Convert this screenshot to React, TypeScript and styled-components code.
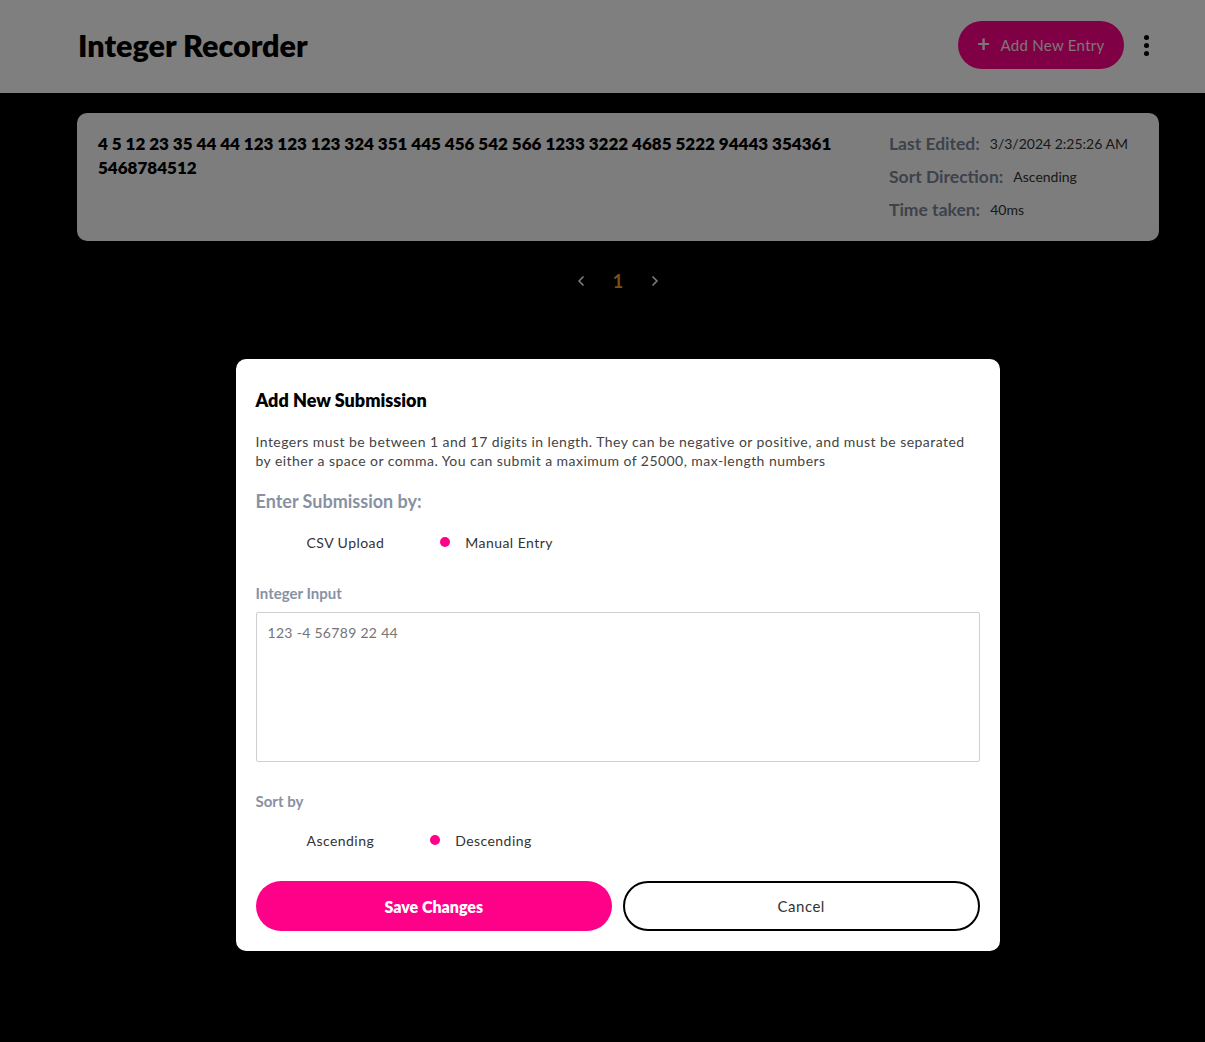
import React from 'react';
import styled, { createGlobalStyle } from 'styled-components';

const GlobalStyle = createGlobalStyle`
  html, body {
    margin: 0;
    padding: 0;
    background: #000;
    font-family: Lato, "Open Sans", sans-serif;
  }
  * { box-sizing: border-box; }
`;

const Page = styled.div`
  min-height: 1042px;
  background: #000;
`;

const Header = styled.header`
  height: 93px;
  background: #fff;
  display: flex;
  align-items: center;
  justify-content: space-between;
  padding: 0 54px 3px 78px;
`;

const Title = styled.h1`
  margin: 0;
  font-size: 30.5px;
  font-weight: 800;
  color: #000;
`;

const HeaderActions = styled.div`
  display: flex;
  align-items: center;
  gap: 18px;
`;

const AddButton = styled.button`
  height: 48px;
  width: 166px;
  border: none;
  border-radius: 24px;
  background: #ff0088;
  color: #fde8f2;
  font-family: inherit;
  font-size: 15px;
  letter-spacing: 0.3px;
  display: flex;
  align-items: center;
  justify-content: center;
  gap: 10px;
  padding: 0;
`;

const Plus = styled.span`
  font-size: 22px;
  font-weight: 700;
  line-height: 1;
  margin-top: -2px;
`;

const Kebab = styled.div`
  display: flex;
  flex-direction: column;
  gap: 3px;
  padding: 0 2px;
`;

const Dot = styled.span`
  width: 5px;
  height: 5px;
  border-radius: 50%;
  background: #000;
`;

const Content = styled.main`
  padding: 20px 46px 0 77px;
`;

const Card = styled.section`
  background: #fafafa;
  border-radius: 10px;
  height: 128px;
  padding: 19px 21px;
  display: flex;
  gap: 40px;
`;

const Numbers = styled.div`
  flex: 1;
  font-size: 17px;
  font-weight: 800;
  line-height: 24px;
  color: #000;
`;

const Meta = styled.div`
  width: 249px;
  display: flex;
  flex-direction: column;
  gap: 11px;
  padding-top: 1px;
`;

const MetaRow = styled.div`
  display: flex;
  align-items: center;
  gap: 10px;
  line-height: 22px;
`;

const MetaLabel = styled.span`
  font-size: 17.5px;
  font-weight: 700;
  color: #7a8496;
`;

const MetaValue = styled.span`
  font-size: 14px;
  color: #333;
`;

const Pagination = styled.nav`
  margin-top: 30px;
  display: flex;
  justify-content: center;
  align-items: center;
  gap: 24px;
  height: 20px;
`;

const PageArrow = styled.span`
  display: flex;
  color: #fff;
`;

const PageNumber = styled.span`
  color: #f0a22a;
  font-size: 18px;
  font-weight: 700;
`;

const Overlay = styled.div`
  position: fixed;
  inset: 0;
  background: rgba(0, 0, 0, 0.5);
  display: flex;
  justify-content: center;
  align-items: flex-start;
  padding: 359px 0 0 30px;
`;

const Modal = styled.div`
  width: 764px;
  background: #fff;
  border-radius: 10px;
  padding: 30px 20px 20px;
`;

const ModalTitle = styled.h2`
  margin: 0;
  font-size: 18px;
  line-height: 22px;
  font-weight: 800;
  color: #000;
`;

const Description = styled.p`
  margin: 21px 0 0;
  font-size: 14px;
  line-height: 19px;
  letter-spacing: 0.45px;
  color: #444;
`;

const SectionTitle = styled.h3`
  margin: 20px 0 0;
  font-size: 18px;
  line-height: 22px;
  font-weight: 700;
  color: #8891a3;
`;

const FieldLabel = styled.label<{ $top: number }>`
  display: block;
  margin-top: ${(p) => p.$top}px;
  font-size: 15px;
  line-height: 18px;
  font-weight: 700;
  color: #8891a3;
`;

const RadioRow = styled.div`
  margin-top: 20px;
  height: 20px;
  display: flex;
  align-items: center;
  gap: 56px;
  padding-left: 26px;
`;

const RadioOption = styled.div`
  display: flex;
  align-items: center;
  gap: 15px;
  font-size: 14px;
  letter-spacing: 0.45px;
  color: #333;
`;

const RadioDot = styled.span<{ $checked?: boolean }>`
  width: 10px;
  height: 10px;
  border-radius: 50%;
  background: ${(p) => (p.$checked ? '#ff0088' : 'transparent')};
`;

const TextArea = styled.textarea`
  display: block;
  margin-top: 10px;
  width: 100%;
  height: 150px;
  border: 1px solid #cfcfcf;
  border-radius: 2px;
  padding: 11px 11px;
  font-family: inherit;
  font-size: 14px;
  letter-spacing: 0.3px;
  resize: none;
  &::placeholder {
    color: #757575;
  }
`;

const ButtonRow = styled.div`
  margin-top: 31px;
  display: grid;
  grid-template-columns: 1fr 1fr;
  gap: 11px;
`;

const ModalButton = styled.button<{ $primary?: boolean }>`
  height: 50px;
  border-radius: 25px;
  font-family: inherit;
  font-size: ${(p) => (p.$primary ? 16 : 15)}px;
  letter-spacing: ${(p) => (p.$primary ? 0 : 0.5)}px;
  border: ${(p) => (p.$primary ? 'none' : '2px solid #000')};
  background: ${(p) => (p.$primary ? '#ff0088' : '#fff')};
  color: ${(p) => (p.$primary ? '#fff' : '#333')};
  font-weight: ${(p) => (p.$primary ? 800 : 400)};
`;

const Chevron = ({ dir }: { dir: 'left' | 'right' }) => (
  <svg width="16" height="16" viewBox="0 0 24 24" fill="none" stroke="currentColor" strokeWidth="2.5" strokeLinecap="round" strokeLinejoin="round">
    <path d={dir === 'left' ? 'M15 6l-6 6 6 6' : 'M9 6l6 6-6 6'} />
  </svg>
);

const Radio = ({ label, checked }: { label: string; checked?: boolean }) => (
  <RadioOption>
    <RadioDot $checked={checked} />
    <span>{label}</span>
  </RadioOption>
);

const App: React.FC = () => {
  return (
    <Page>
      <GlobalStyle />
      <Header>
        <Title>Integer Recorder</Title>
        <HeaderActions>
          <AddButton>
            <Plus>+</Plus>
            <span>Add New Entry</span>
          </AddButton>
          <Kebab>
            <Dot />
            <Dot />
            <Dot />
          </Kebab>
        </HeaderActions>
      </Header>
      <Content>
        <Card>
          <Numbers>
            4 5 12 23 35 44 44 123 123 123 324 351 445 456 542 566 1233 3222 4685 5222 94443 354361 5468784512
          </Numbers>
          <Meta>
            <MetaRow>
              <MetaLabel>Last Edited:</MetaLabel>
              <MetaValue>3/3/2024 2:25:26 AM</MetaValue>
            </MetaRow>
            <MetaRow>
              <MetaLabel>Sort Direction:</MetaLabel>
              <MetaValue>Ascending</MetaValue>
            </MetaRow>
            <MetaRow>
              <MetaLabel>Time taken:</MetaLabel>
              <MetaValue>40ms</MetaValue>
            </MetaRow>
          </Meta>
        </Card>
        <Pagination>
          <PageArrow>
            <Chevron dir="left" />
          </PageArrow>
          <PageNumber>1</PageNumber>
          <PageArrow>
            <Chevron dir="right" />
          </PageArrow>
        </Pagination>
      </Content>
      <Overlay>
        <Modal>
          <ModalTitle>Add New Submission</ModalTitle>
          <Description>
            Integers must be between 1 and 17 digits in length. They can be negative or positive, and must be separated
            by either a space or comma. You can submit a maximum of 25000, max-length numbers
          </Description>
          <SectionTitle>Enter Submission by:</SectionTitle>
          <RadioRow>
            <Radio label="CSV Upload" />
            <Radio label="Manual Entry" checked />
          </RadioRow>
          <FieldLabel $top={32}>Integer Input</FieldLabel>
          <TextArea placeholder="123 -4 56789 22 44" />
          <FieldLabel $top={30}>Sort by</FieldLabel>
          <RadioRow>
            <Radio label="Ascending" />
            <Radio label="Descending" checked />
          </RadioRow>
          <ButtonRow>
            <ModalButton $primary>Save Changes</ModalButton>
            <ModalButton>Cancel</ModalButton>
          </ButtonRow>
        </Modal>
      </Overlay>
    </Page>
  );
};

export default App;
